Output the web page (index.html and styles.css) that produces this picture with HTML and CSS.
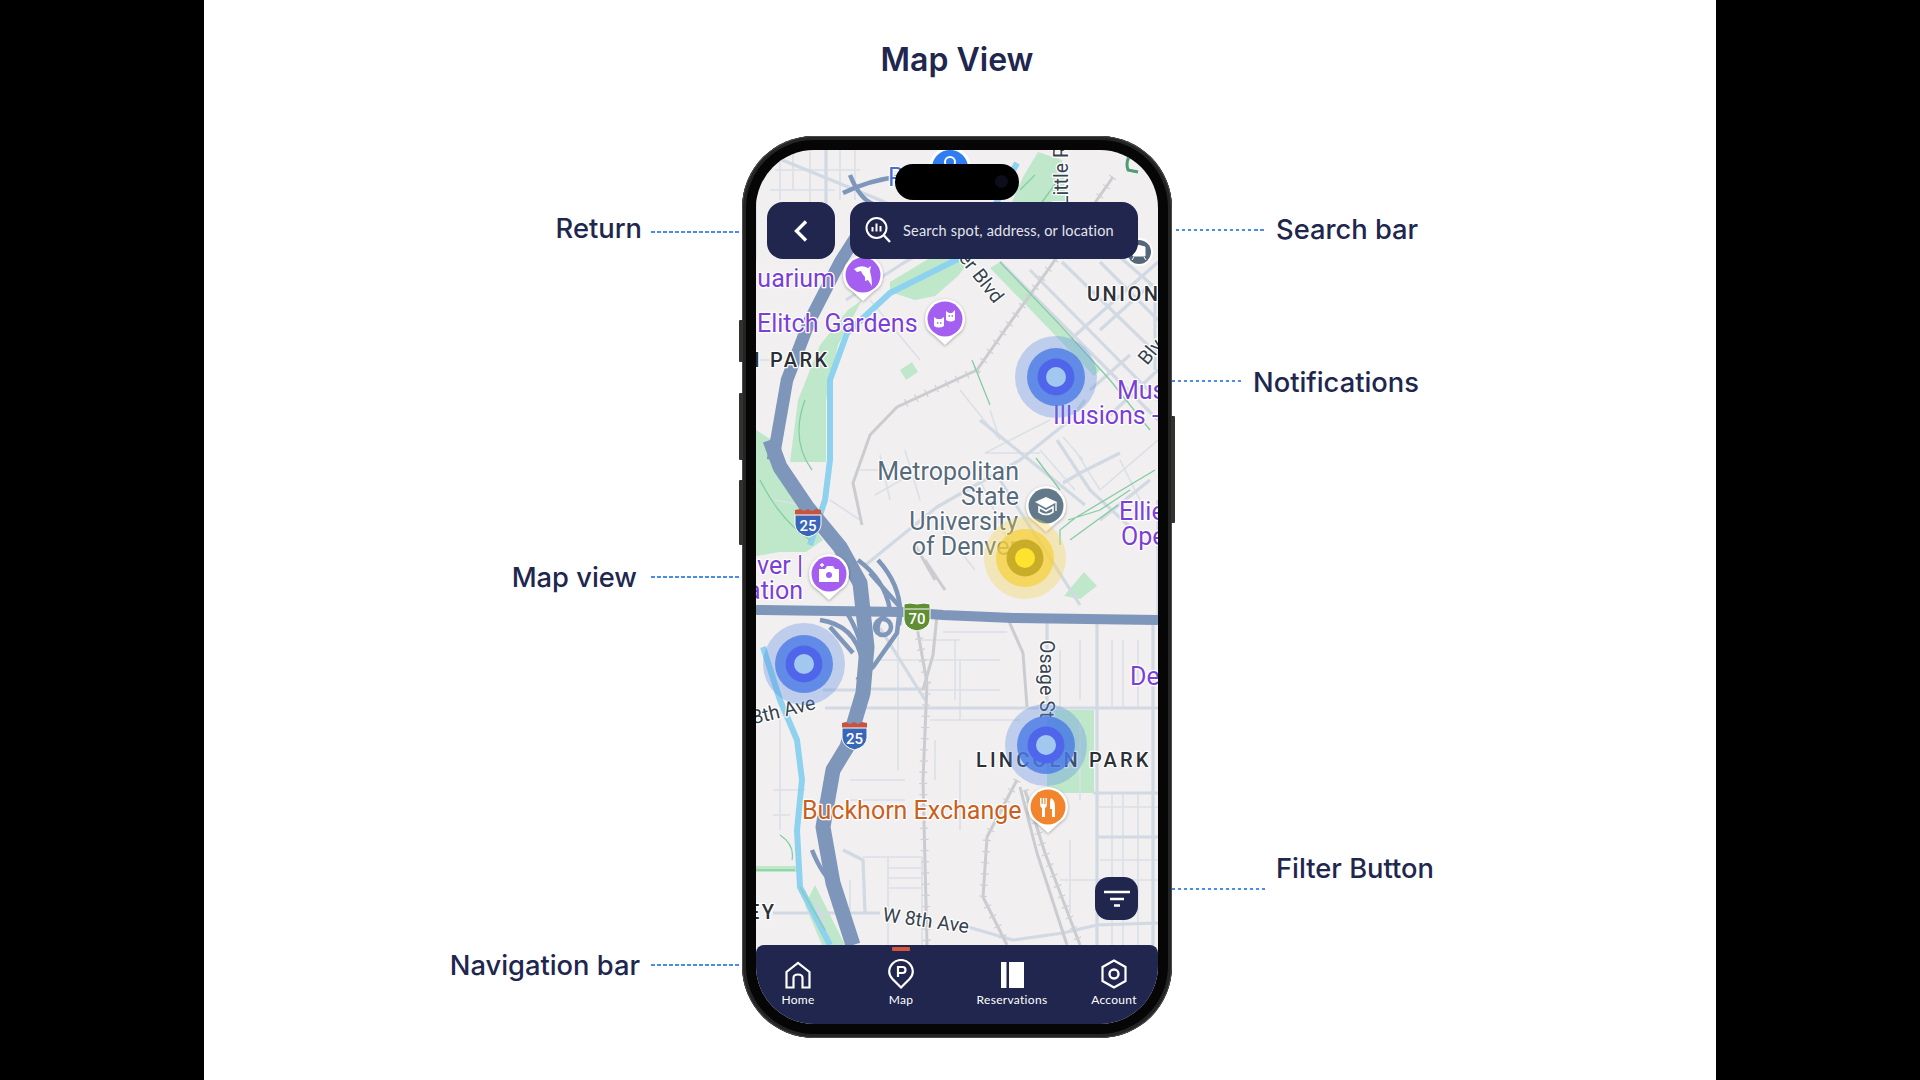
FILE: index.html
```html
<!DOCTYPE html>
<html lang="en">
<head>
    <meta charset="UTF-8">
    <meta name="viewport" content="width=device-width, initial-scale=1.0">
    <title>Map View</title>
    <link rel="stylesheet" href="styles.css">
</head>
<body>
    <div class="slide">
        <h1 class="title">Map View</h1>

        <!-- callouts around the phone -->
        <div class="callout c-return"><span>Return</span><i class="leader"></i></div>
        <div class="callout c-mapview"><span>Map view</span><i class="leader"></i></div>
        <div class="callout c-nav"><span>Navigation bar</span><i class="leader"></i></div>
        <div class="callout c-search"><i class="leader"></i><span>Search bar</span></div>
        <div class="callout c-notif"><i class="leader"></i><span>Notifications</span></div>
        <div class="callout c-filter"><i class="leader"></i><span>Filter Button</span></div>

        <div class="phone">
            <i class="side-btn btn-silent"></i>
            <i class="side-btn btn-up"></i>
            <i class="side-btn btn-down"></i>
            <i class="side-btn btn-power"></i>
            <div class="screen">
                <svg class="map" viewBox="756 150 402 874" width="402" height="874">
                    <rect x="756" y="150" width="402" height="874" fill="#f1eff0"/>

                    <!-- parks -->
                    <g class="park">
                        <path d="M756 480 L780 470 L800 510 L823 540 L806 552 L780 552 L756 556Z"/>
                        <path d="M756 430 L772 440 L782 480 L756 490Z"/>
                        <path d="M848 310 L862 300 L838 345 L826 400 L826 462 L790 462 L798 400 L820 345Z"/>
                        <path d="M1023 177 L1038 152 L1062 160 L1066 202 L1012 202Z"/>
                        <path d="M890 282 L930 258 L972 258 L958 276 L935 296 L915 300 L890 292Z"/>
                        <path d="M1064 596 L1084 572 L1097 586 L1080 599Z"/>
                        <path d="M1047 710 H1094 V793 H1047Z"/>
                        <path d="M756 866 H800 V872 H756Z"/>
                        <path d="M805 905 L822 945 H845 L825 905 L815 885Z"/>
                        <path d="M1000 262 L1060 326 L1100 370 L1094 376 L1050 330 L990 268Z"/>
                        <path d="M900 370 L912 362 L918 372 L906 380Z"/>
                    </g>

                    <!-- small streets -->
                    <g class="st-thin">
                        <path d="M780 150 V200 M793 155 V190 M810 152 V205 M840 150 V200 M855 150 V200 M775 170 H860 M770 190 H835"/>
                        <path d="M880 455 L890 500 M905 450 L920 500 M860 470 H900 M875 495 L910 475 M935 520 L975 570 M980 480 L1010 545"/>
                        <path d="M1075 450 L1100 490 M1040 450 L1075 490 M1100 490 L1158 440 M1120 460 L1150 520 M985 453 L1030 430 L1050 420 M1063 437 L1083 460"/>
                        <path d="M920 640 H960 M955 640 V700 M880 660 H1000 M960 660 V720 M1060 650 V710 M1080 640 V700 M1112 640 V708 M1123 640 V708 M1138 640 V708 M943 632 H1007 M898 620 V770"/>
                        <path d="M780 710 V830 M800 760 V790 M820 800 V850 M850 780 H905 M850 800 H905 M850 880 V945 M863 857 H922 M888 868 H922 M888 878 H922 M888 888 H922 M888 857 V945 M922 857 V945 M773 790 H805 M773 815 H790"/>
                        <path d="M1080 720 V800 M1112 793 V945 M1123 793 V945 M1138 793 V945 M1060 880 H1158 M1097 807 H1158 M1100 860 H1158 M1070 840 V913 M930 720 H1020 M935 740 V780 M960 760 V830"/>
                        <path d="M756 360 H770 M756 150 V260 M775 500 L800 505 M830 500 L860 520 M870 630 V680 M880 690 H1000"/>
                        <path d="M870 300 L920 360 M960 390 L1000 440 M985 453 H1040 M990 410 L1000 440"/>
                    </g>
                    <g class="st">
                        <path d="M770 155 L880 200 M826 150 V205 M880 200 L905 212 M846 300 L905 262 L960 230"/>
                        <path d="M1000 262 L1158 420 M1030 270 L1158 400 M1062 262 L1158 355 M1100 262 L1158 320 M1158 262 L1070 340 M1150 285 L1100 330 M1130 355 L1090 390 M1158 370 L1110 415 M1100 240 L1158 290"/>
                        <path d="M1020 460 L937 507 L863 567 M1020 460 L1070 420 L1085 400 M980 420 L1085 505 M1155 300 V370 M1057 440 L1090 490 L1130 527 M1120 453 L1080 473 L1063 483"/>
                        <path d="M1100 520 L1150 480 M1158 500 V620"/>
                        <path d="M825 708 H1158 M1097 620 V945 M1153 625 V945 M1047 620 V710 M1093 793 H1158 M1097 837 H1158 M823 690 H863 M870 689 H923"/>
                        <path d="M773 913 H880 M968 927 L1013 940 L1063 933 L1097 925 L1158 923 M843 850 L863 860 L865 913"/>
                        <path d="M815 900 L830 945"/>
                        <path d="M880 628 L925 700 M1000 480 L1080 605"/>
                    </g>
                    <g class="rail">
                        <path d="M1113 177 L1050 267 L1007 327 L977 370 L897 407 L870 435 L853 483 L862 525"/>
                        <path d="M917 627 L927 683 L923 780 L927 945"/>
                        <path d="M937 615 L933 655 L923 690 M1007 617 L1023 653 L1027 707"/>
                        <path d="M1017 780 L987 837 L983 897 L1007 945 M1020 787 L1037 853 L1067 945 M1025 790 L1045 853 L1080 945"/>
                        <path d="M925 560 L945 590 M915 545 L935 580"/>
                    </g>
                    <g class="rail-ticks">
                        <path d="M1113 177 L1050 267 L1007 327 L977 370 L897 407"/>
                        <path d="M917 627 L927 683 L923 780 L927 945"/>
                        <path d="M1017 780 L987 837 L983 897 L1007 945 M1025 790 L1045 853 L1080 945"/>
                    </g>

                    <!-- water -->
                    <g class="water">
                        <path d="M1017 163 L990 215 L960 258 L890 293 L847 333 L830 380 L830 460 L825 500 L810 545"/>
                        <path d="M763 647 L780 700 L797 740 L802 780 L797 830 L800 887 L830 945"/>
                    </g>
                    <g class="trail">
                        <path d="M1000 262 L1060 325 L1110 380 L1150 430 M1040 205 L1058 180 M1035 175 L1020 190"/>
                        <path d="M805 400 Q790 440 812 470 M760 480 Q780 520 810 540 M1036 458 L1060 490 M1155 470 L1075 518 L1060 530 L1060 545 M1130 490 L1100 510 L1068 520 M1118 505 L1070 540"/>
                        <path d="M756 870 H795 M780 835 Q795 845 792 860 M800 887 L825 930 M972 360 L990 405"/>
                    </g>
                    <path class="trail-dark" d="M1136 150 Q1124 158 1128 170 L1138 172"/>

                    <!-- highways -->
                    <g class="hw">
                        <path d="M770 440 L780 467 L807 507 L840 547 L860 583 L867 647 L863 693 L847 747 L833 770 L823 827 L833 883 L853 945"/>
                        <path class="hw-upper" d="M773 460 L787 380 L810 320 L840 262 L872 212"/>
                        <path class="hw-thin" d="M843 193 Q870 180 897 177 M875 205 Q860 200 850 175"/>
                        <path class="hw-mid" d="M756 610 L903 612 L943 615 L1013 618 L1158 620"/>
                        <path class="hw-thin" d="M870 573 L900 607 L897 633 L873 667 L857 680 M858 560 Q885 580 890 610 M878 560 Q905 590 899 625 M830 627 L853 653 M845 610 Q862 635 866 670 M820 620 Q855 625 862 660 M812 850 Q822 875 835 885 M890 612 Q875 620 878 632"/>
                        <circle class="hw-thin" cx="883" cy="627" r="8"/>
                    </g>

                    <!-- road labels -->
                    <text class="label lbl-road" transform="translate(1068 206) rotate(-90)">Little R</text>
                    <text class="label lbl-road" transform="translate(958 258) rotate(52)">er Blvd</text>
                    <text class="label lbl-road" transform="translate(1147 366) rotate(-50)">Blvd</text>
                    <text class="label lbl-road" transform="translate(1040 640) rotate(90)">Osage St</text>
                    <text class="label lbl-road" transform="translate(743 727) rotate(-14)">18th Ave</text>
                    <text class="label lbl-road" transform="translate(882 921) rotate(8)">W 8th Ave</text>

                    <!-- area labels -->
                    <text class="label lbl-area" x="770" y="367">PARK</text>
                    <text class="label lbl-area" x="754" y="367">I</text>
                    <text class="label lbl-area" x="1087" y="301">UNION</text>
                    <text class="label lbl-area" x="748" y="919">EY</text>
                    <text class="label lbl-area lbl-lincoln" x="976" y="767">LINCOLN PARK</text>

                    <!-- places -->
                    <text class="label lbl-blue" x="888" y="186">P</text>
                    <text class="label lbl-poi" x="835" y="287" text-anchor="end">uarium</text>
                    <text class="label lbl-poi" x="757" y="332">Elitch Gardens</text>
                    <text class="label lbl-poi" x="1117" y="399">Mus</text>
                    <text class="label lbl-poi" x="1053" y="424">Illusions -</text>
                    <text class="label lbl-poi" x="1119" y="520">Ellie</text>
                    <text class="label lbl-poi" x="1121" y="545">Ope</text>
                    <text class="label lbl-poi" x="803" y="574" text-anchor="end">ver |</text>
                    <text class="label lbl-poi" x="803" y="599" text-anchor="end">ation</text>
                    <text class="label lbl-poi" x="1130" y="685">De</text>
                    <text class="label lbl-uni" x="1019" y="480" text-anchor="end">Metropolitan</text>
                    <text class="label lbl-uni" x="1019" y="505" text-anchor="end">State</text>
                    <text class="label lbl-uni" x="1018" y="530" text-anchor="end">University</text>
                    <text class="label lbl-uni" x="1018" y="555" text-anchor="end">of Denver</text>
                    <text class="label lbl-food" x="802" y="819">Buckhorn Exchange</text>

                    <!-- interstate shields -->
                    <g>
                        <path class="shield-top" d="M795 510 L800 509 L804 511 L808 509 L812 511 L816 509 L821 510 V516 H795Z"/>
                        <path class="shield" d="M795 515 H821 V525 Q820 534 808 537 Q796 534 795 525Z"/>
                        <text class="shield-num" x="808" y="531">25</text>
                        <path class="shield-top" d="M842 723 L846 722 L850 724 L854 722 L858 724 L862 722 L867 723 V729 H842Z"/>
                        <path class="shield" d="M842 728 H867 V738 Q866 747 854.500 750 Q843 747 842 738Z"/>
                        <text class="shield-num" x="854.500" y="744">25</text>
                        <path class="shield-green" d="M904 604 L910 603 L917 604 L924 603 L930 604 V620 Q929 629 917 631 Q905 629 904 620Z"/>
                        <path d="M905 609 H929" stroke="#fff" stroke-width="1" fill="none"/>
                        <text class="shield-num" x="917" y="624">70</text>
                    </g>

                    <!-- pins -->
                    <circle class="pin-edge" cx="950" cy="168" r="21"/>
                    <circle cx="950" cy="168" r="18" fill="#2f7df0"/>
                    <circle cx="950" cy="162" r="5" fill="none" stroke="#fff" stroke-width="2"/>

                    <g class="pin" transform="translate(863 275)">
                        <path class="pin-edge" d="M-20 0 A20 20 0 0 1 20 0 Q20 11 11 16 L0 26 L-11 16 Q-20 11 -20 0Z"/>
                        <circle r="17.500" fill="#a55ff0"/>
                        <path d="M-9 -6 Q-2 -11 5 -7 L8 -9 L7 -4 Q9 3 9 11 L5 5 L2 6 L2 2 Q-1 -1 -2 -4 L-6 -3Z" fill="#fff"/>
                    </g>
                    <g class="pin" transform="translate(945 319)">
                        <path class="pin-edge" d="M-20 0 A20 20 0 0 1 20 0 Q20 11 11 16 L0 26 L-11 16 Q-20 11 -20 0Z"/>
                        <circle r="17.500" fill="#a55ff0"/>
                        <path d="M-11 -2 L-8 0 H-4 L-1 -2 V7 Q-6 10 -11 7Z M1 -8 L4 -6 H7 L10 -9 V1 Q6 4 1 1Z" fill="#fff"/>
                        <path d="M-8 4 H-6.500 M-5 4 H-3.500 M3.500 -3 H5 M6.500 -3 H8" stroke="#a55ff0" stroke-width="1.500"/>
                    </g>
                    <g class="pin" transform="translate(829 574)">
                        <path class="pin-edge" d="M-20 0 A20 20 0 0 1 20 0 Q20 11 11 16 L0 26 L-11 16 Q-20 11 -20 0Z"/>
                        <circle r="17.500" fill="#a55ff0"/>
                        <path d="M-10 -5 H-4 L-2 -8 H4 L6 -5 H10 V8 H-10Z" fill="#fff"/>
                        <circle r="3" cy="1" fill="#a55ff0"/>
                        <path d="M-9 -9 H-5 M-7 -11 V-7" stroke="#fff" stroke-width="1.300"/>
                    </g>
                    <g class="pin" transform="translate(1046 506)">
                        <path class="pin-edge" d="M-20 0 A20 20 0 0 1 20 0 Q20 11 11 16 L0 26 L-11 16 Q-20 11 -20 0Z"/>
                        <circle r="17.500" fill="#62798a"/>
                        <path d="M-11 -4 L0 -9 L11 -4 L0 2Z" fill="#fff"/>
                        <path d="M-7 1 L0 5 L7 1 V6 Q0 11 -7 6Z" fill="none" stroke="#fff" stroke-width="1.600"/>
                        <path d="M10 -4 V5" stroke="#fff" stroke-width="1.300"/>
                    </g>
                    <g class="pin" transform="translate(1048 807)">
                        <path class="pin-edge" d="M-20 0 A20 20 0 0 1 20 0 Q20 11 11 16 L0 26 L-11 16 Q-20 11 -20 0Z"/>
                        <circle r="17.500" fill="#f3842e"/>
                        <path d="M-8 -9 V-3 Q-8 0 -6 1 V10 H-3 V1 Q-1 0 -1 -3 V-9 H-2.500 V-3 H-3.700 V-9 H-5.300 V-3 H-6.500 V-9Z M3 -9 Q7 -7 7 0 V10 H4 V2 H2 V-4 Q2 -7 3 -9Z" fill="#fff"/>
                    </g>
                    <g transform="translate(1139 252)">
                        <circle class="pin-edge" r="14"/>
                        <circle r="12" fill="#55687a"/>
                        <path d="M-6 -5 Q0 -8 6 -5 V4 H-6Z M-5 5 L-7 8 M5 5 L7 8" fill="#fff" stroke="#fff"/>
                    </g>

                    <!-- parking spots -->
                    <g class="spot-blue" transform="translate(1056 377)">
                        <circle class="halo" r="41"/><circle class="mid" r="29"/><circle class="ring" r="18.500"/><circle class="core" r="10"/>
                    </g>
                    <g class="spot-blue" transform="translate(804 664)">
                        <circle class="halo" r="41"/><circle class="mid" r="29"/><circle class="ring" r="18.500"/><circle class="core" r="10"/>
                    </g>
                    <g class="spot-blue" transform="translate(1046 745)">
                        <circle class="halo" r="41"/><circle class="mid" r="29"/><circle class="ring" r="18.500"/><circle class="core" r="10"/>
                    </g>
                    <g class="spot-yellow" transform="translate(1025 558)">
                        <circle class="halo" r="41"/><circle class="mid" r="29"/><circle class="ring" r="18.500"/><circle class="core" r="10"/>
                    </g>
                </svg>

                <div class="island"><i class="island-cam"></i></div>

                <div class="topbar">
                    <button class="back-btn">
                        <svg width="16" height="24" viewBox="0 0 16 24"><path d="M13 2.500 L3.500 12 L13 21.500" fill="none" stroke="#fff" stroke-width="3.400"/></svg>
                    </button>
                    <div class="search">
                        <svg width="26" height="26" viewBox="0 0 26 26">
                            <circle cx="11.500" cy="11" r="10" fill="none" stroke="#fff" stroke-width="2"/>
                            <path d="M19 18.500 L25 25" stroke="#fff" stroke-width="2.400" fill="none"/>
                            <path d="M7.500 10 V14.500 M11.500 6.500 V14.500 M15.500 9 V14.500" stroke="#fff" stroke-width="2" fill="none"/>
                        </svg>
                        <span>Search spot, address, or location</span>
                    </div>
                </div>

                <button class="filter-btn">
                    <svg width="28" height="18" viewBox="0 0 28 18"><path d="M1 2 H27 M7 9 H21 M11 15.500 H17" stroke="#fff" stroke-width="2.600" fill="none"/></svg>
                </button>

                <nav class="navbar">
                    <i class="nav-marker"></i>
                    <a class="nav-item">
                        <svg width="26" height="28" viewBox="0 0 26 28"><path d="M1.500 26.500 V11 L13 1.800 L24.500 11 V26.500 H17.500 V17 Q17.500 13.500 13 13.500 Q8.500 13.500 8.500 17 V26.500Z" fill="none" stroke="#fff" stroke-width="2.200"/></svg>
                        <span>Home</span>
                    </a>
                    <a class="nav-item">
                        <svg width="26" height="30" viewBox="0 0 26 30"><path d="M13 28.500 L4.500 20 Q1.200 16.500 1.200 12.800 A11.800 11.800 0 0 1 24.800 12.800 Q24.800 16.500 21.500 20Z" fill="none" stroke="#fff" stroke-width="2.200"/><path d="M10 18 V8 H14.500 Q17.500 8 17.500 11 Q17.500 14 14.500 14 H10" fill="none" stroke="#fff" stroke-width="2.200"/></svg>
                        <span>Map</span>
                    </a>
                    <a class="nav-item">
                        <svg width="23" height="28" viewBox="0 0 23 28"><path d="M0 1 H5.500 V27 H0Z M8 1 H23 V27 H8Z" fill="#fff"/></svg>
                        <span>Reservations</span>
                    </a>
                    <a class="nav-item nav-account">
                        <svg width="26" height="30" viewBox="0 0 26 30"><path d="M13 1.500 L24.500 8 V22 L13 28.500 L1.500 22 V8Z" fill="none" stroke="#fff" stroke-width="2.200"/><circle cx="13" cy="15" r="4.500" fill="none" stroke="#fff" stroke-width="2.400"/></svg>
                        <span>Account</span>
                    </a>
                </nav>
            </div>
        </div>
    </div>
</body>
</html>
```

FILE: styles.css
```css
body {
    margin: 0;
    background-color: #000;
    font-family: "Inter", "Liberation Sans", sans-serif;
}
.slide {
    position: relative;
    width: 1506px;
    height: 1080px;
    margin-left: 204px;
    padding-right: 6px;
    background-color: #fff;
    display: flex;
    flex-direction: column;
    align-items: center;
    overflow: hidden;
}
.title {
    margin: 40px 0 0;
    height: 96px;
    font-size: 32px;
    line-height: 40px;
    font-weight: 600;
    color: #20264d;
}

/* callouts */
.callout {
    position: absolute;
    display: flex;
    align-items: center;
    font-size: 27.3px;
    line-height: 36px;
    font-weight: 500;
    color: #20264d;
    white-space: nowrap;
}
.leader {
    display: block;
    width: 90px;
    height: 2px;
    background: repeating-linear-gradient(90deg, #4a8de8 0 3.5px, transparent 3.5px 6px);
}
.c-return { top: 211px; right: 975px; gap: 9px; }
.c-return span { margin-bottom: 5px; }
.c-mapview { top: 557px; right: 975px; gap: 14px; }
.c-mapview span { margin-top: 3px; }
.c-nav { top: 945px; right: 975px; gap: 11px; }
.c-nav span { margin-top: 3px; }
.c-search { top: 212px; left: 972px; gap: 10px; }
.c-notif { top: 361px; left: 968px; gap: 10px; }
.c-notif .leader { width: 71px; }
.c-notif span { margin-top: 4px; }
.c-filter { top: 851px; left: 968px; gap: 10px; }
.c-filter .leader { width: 94px; }
.c-filter span { margin-bottom: 39px; }

/* phone */
.phone {
    position: relative;
    width: 402px;
    height: 874px;
    padding: 14px;
    background-color: #060606;
    border-radius: 72px;
    box-shadow: inset 0 0 0 1px #4a4a4a, inset 0 0 0 4px #242424;
}
.side-btn {
    position: absolute;
    width: 4px;
    background-color: #33322f;
    border-radius: 1px;
}
.btn-silent { left: -3px; top: 184px; height: 42px; }
.btn-up { left: -3px; top: 257px; height: 67px; }
.btn-down { left: -3px; top: 344px; height: 65px; }
.btn-power { right: -3px; top: 280px; height: 107px; }
.screen {
    position: relative;
    width: 402px;
    height: 874px;
    border-radius: 58px;
    overflow: hidden;
}
.map {
    display: block;
}
.island {
    position: absolute;
    top: 14px;
    left: 139px;
    width: 124px;
    height: 36px;
    background-color: #000;
    border-radius: 18px;
}
.island-cam {
    position: absolute;
    top: 11px;
    right: 11px;
    width: 13px;
    height: 13px;
    border-radius: 50%;
    background-color: #0d0d1c;
}

/* top controls */
.topbar {
    position: absolute;
    top: 52px;
    left: 11px;
    right: 20px;
    display: flex;
    gap: 15px;
}
.back-btn {
    width: 68px;
    height: 57px;
    padding: 0;
    border: none;
    border-radius: 16px;
    background-color: #20264d;
    display: flex;
    align-items: center;
    justify-content: center;
}
.search {
    flex: 1;
    height: 57px;
    padding-left: 15px;
    padding-bottom: 1px;
    box-sizing: border-box;
    border-radius: 16px;
    background-color: #20264d;
    display: flex;
    align-items: center;
    gap: 12px;
    color: #e4e5ec;
    font-family: "Lato", "Inter", sans-serif;
    font-size: 14.5px;
    letter-spacing: 0.2px;
}
.filter-btn {
    position: absolute;
    top: 727px;
    right: 20px;
    width: 43px;
    height: 43px;
    padding: 0;
    border: none;
    border-radius: 14px;
    background-color: #20264d;
    display: flex;
    align-items: center;
    justify-content: center;
}

/* bottom nav */
.navbar {
    position: absolute;
    left: 0;
    right: 0;
    bottom: 0;
    height: 79px;
    background-color: #20264d;
    border-radius: 8px 8px 0 0;
    display: grid;
    grid-template-columns: 84px 122px 100px 96px;
}
.nav-marker {
    position: absolute;
    top: 2px;
    left: 136px;
    width: 18px;
    height: 4px;
    border-radius: 1px;
    background-color: #d4553a;
}
.nav-item {
    display: flex;
    flex-direction: column;
    align-items: center;
    justify-content: flex-end;
    height: 62px;
    gap: 4px;
    color: #fff;
    font-size: 12px;
    line-height: 14px;
    font-family: "Lato", "Inter", sans-serif;
    letter-spacing: 0.3px;
}
.nav-account {
    padding-left: 8px;
}

/* map layers */
.park path { fill: #bfe8cb; }
.st, .st-thin, .rail, .rail-ticks, .water, .trail, .trail-dark, .hw {
    fill: none;
    stroke-linejoin: round;
}
.st { stroke: #d1d9e3; stroke-width: 3.2; }
.st-thin { stroke: #dbe0e7; stroke-width: 1.6; }
.rail { stroke: #cbccd0; stroke-width: 3; }
.rail-ticks { stroke: #cfd0d4; stroke-width: 8; stroke-dasharray: 1.2 10; }
.water { stroke: #8ed2ef; stroke-width: 6; }
.trail { stroke: #84cda2; stroke-width: 1.3; }
.trail-dark { stroke: #4f9b74; stroke-width: 3; }
.hw { stroke: #7d96b9; stroke-width: 15; }
.hw-upper { stroke-width: 12.5; }
.hw-mid { stroke-width: 10; }
.hw-thin { stroke-width: 4.5; }

.label {
    font-family: "Roboto", "Liberation Sans", sans-serif;
    paint-order: stroke;
    stroke: #fff;
    stroke-width: 2.5px;
    stroke-linejoin: round;
}
.lbl-poi { font-size: 25px; fill: #7b3fd6; }
.lbl-blue { font-size: 25px; fill: #4a6fd0; }
.lbl-uni { font-size: 25px; fill: #566a7c; }
.lbl-food { font-size: 25px; fill: #c9601c; }
.lbl-road { font-size: 19.5px; fill: #37434f; }
.lbl-area { font-size: 20px; font-weight: 500; letter-spacing: 2.5px; fill: #2c2f36; }
.lbl-lincoln { letter-spacing: 3.2px; }

.shield { fill: #3a66b8; stroke: #fff; stroke-width: 1; }
.shield-top { fill: #c9543e; }
.shield-green { fill: #5f8e34; stroke: #fff; stroke-width: 1; }
.shield-num {
    font-family: "Roboto", sans-serif;
    font-size: 15px;
    font-weight: 500;
    fill: #fff;
    text-anchor: middle;
}
.pin-edge { fill: #fff; }
.pin { filter: drop-shadow(0 1px 1.5px rgba(0, 0, 0, 0.3)); }

.spot-blue .halo { fill: rgba(90, 140, 225, 0.34); }
.spot-blue .mid { fill: rgba(70, 120, 230, 0.78); }
.spot-blue .ring { fill: #4f66ea; }
.spot-blue .core { fill: #a3c8ef; }
.spot-yellow .halo { fill: rgba(243, 214, 90, 0.36); }
.spot-yellow .mid { fill: rgba(245, 208, 60, 0.72); }
.spot-yellow .ring { fill: #c9ad28; }
.spot-yellow .core { fill: #fde22e; }
```
